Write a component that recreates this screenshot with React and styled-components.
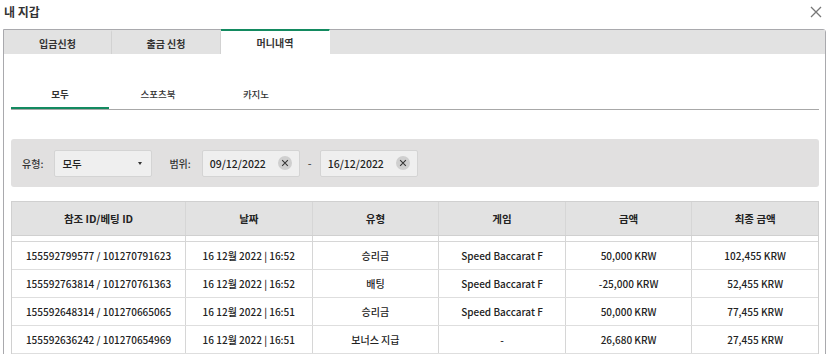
import React, { useState } from 'react';
import styled, { createGlobalStyle } from 'styled-components';

const GlobalStyle = createGlobalStyle`
  html, body {
    margin: 0;
    padding: 0;
    background: #fff;
  }
  body {
    font-family: "Noto Sans CJK KR", sans-serif;
    color: #222;
  }
`;

const Page = styled.div`
  width: 835px;
  height: 354px;
  overflow: hidden;
`;

const TitleBar = styled.div`
  height: 29px;
  display: flex;
  align-items: center;
  justify-content: space-between;
  padding: 0 12px 6px 4px;
  box-sizing: border-box;
`;

const Title = styled.h1`
  margin: 0;
  font-size: 12px;
  font-weight: 700;
  color: #333;
`;

const Close = styled.button`
  border: 0;
  background: none;
  padding: 0;
  display: flex;
  cursor: pointer;
`;

const Frame = styled.div`
  margin: 0 9px 0 3px;
  border: 1px solid #a9a9ad;
  border-top-right-radius: 3px;
  height: 400px;
`;

const TabBar = styled.div`
  display: flex;
  height: 24px;
  background: #e2e2e2;
`;

const Tab = styled.div`
  width: ${p => p.$w}px;
  display: flex;
  align-items: center;
  justify-content: center;
  font-size: 10px;
  font-weight: 700;
  color: #333;
  box-sizing: border-box;
  border-right: 1px solid ${p => (p.$active ? 'transparent' : '#d2d2d2')};
  background: ${p => (p.$active ? '#fff' : 'transparent')};
  border-top: 2px solid ${p => (p.$active ? '#138a60' : 'transparent')};
  margin-top: ${p => (p.$active ? '-1px' : '0')};
  height: ${p => (p.$active ? '25px' : '24px')};
`;

const Content = styled.div`
  padding: 24px 6px 0 7px;
`;

const SubTabs = styled.div`
  display: flex;
  border-bottom: 1px solid #a8a8a8;
`;

const SubTab = styled.div`
  flex: 0 0 98px;
  height: 31px;
  box-sizing: border-box;
  display: flex;
  align-items: center;
  justify-content: center;
  padding-top: 2px;
  font-size: 9.5px;
  font-weight: ${p => (p.$active ? 700 : 500)};
  color: #333;
  border-bottom: 2px solid ${p => (p.$active ? '#138a60' : 'transparent')};
  cursor: pointer;
`;

const Filter = styled.div`
  margin-top: 29px;
  height: 48px;
  background: #e1e0e0;
  border-radius: 3px;
  display: flex;
  align-items: center;
  padding: 0 11px;
`;

const Label = styled.span`
  font-size: 10px;
  font-weight: 500;
  color: #333;
  margin-right: ${p => p.$mr}px;
`;

const Box = styled.div`
  width: 98px;
  height: 27px;
  box-sizing: border-box;
  background: #efefef;
  border: 1px solid #d4d4d4;
  border-radius: 2px;
  display: flex;
  align-items: center;
  justify-content: space-between;
  padding: 0 7px 0 7px;
  font-size: 10.5px;
  font-weight: 500;
  color: #222;
  margin-right: ${p => p.$mr || 0}px;
`;

const Caret = styled.span`
  width: 0;
  height: 0;
  margin-right: 2px;
  border-left: 2px solid transparent;
  border-right: 2px solid transparent;
  border-top: 3px solid #333;
`;

const Clear = styled.span`
  width: 14px;
  height: 14px;
  border-radius: 50%;
  background: #cfcfcf;
  display: flex;
  align-items: center;
  justify-content: center;
`;

const Dash = styled.span`
  width: 20px;
  text-align: center;
  font-size: 11px;
  color: #333;
`;

const Table = styled.div`
  margin-top: 14px;
  border-left: 1px solid #d0d0d0;
  border-right: 1px solid #d0d0d0;
`;

const cols = '173px repeat(5, 1fr)';

const HeadRow = styled.div`
  display: grid;
  grid-template-columns: ${cols};
  height: 35px;
  background: #e2e2e2;
  border-top: 1px solid #d0d0d0;
  border-bottom: 1px solid #d0d0d0;
  box-sizing: border-box;
`;

const Gap = styled.div`
  display: grid;
  grid-template-columns: ${cols};
  height: 5px;
  border-bottom: 1px solid #d6d6d6;
`;

const Row = styled.div`
  display: grid;
  grid-template-columns: ${cols};
  height: 28px;
  border-bottom: 1px solid #dedede;
  box-sizing: border-box;
`;

const Cell = styled.div`
  display: flex;
  align-items: center;
  justify-content: center;
  font-size: ${p => (p.$head ? '10.5px' : '10px')};
  font-weight: ${p => (p.$head ? 700 : 500)};
  color: #222;
  border-left: ${p => (p.$first ? 'none' : '1px solid #d6d6d6')};
  white-space: nowrap;
`;

const XIcon = ({ size = 14, stroke = '#777', width = 1.3 }) => (
  <svg width={size} height={size} viewBox="0 0 14 14">
    <path d="M2 2L12 12M12 2L2 12" stroke={stroke} strokeWidth={width} fill="none" />
  </svg>
);

const tabs = [
  { label: '입금신청', w: 108 },
  { label: '출금 신청', w: 109 },
  { label: '머니내역', w: 109, active: true },
];

const headers = ['참조 ID/베팅 ID', '날짜', '유형', '게임', '금액', '최종 금액'];

const rows = [
  ['155592799577 / 101270791623', '16 12월 2022 | 16:52', '승리금', 'Speed Baccarat F', '50,000 KRW', '102,455 KRW'],
  ['155592763814 / 101270761363', '16 12월 2022 | 16:52', '배팅', 'Speed Baccarat F', '-25,000 KRW', '52,455 KRW'],
  ['155592648314 / 101270665065', '16 12월 2022 | 16:51', '승리금', 'Speed Baccarat F', '50,000 KRW', '77,455 KRW'],
  ['155592636242 / 101270654969', '16 12월 2022 | 16:51', '보너스 지급', '-', '26,680 KRW', '27,455 KRW'],
];

export default function App() {
  const [sub, setSub] = useState(0);
  return (
    <Page>
      <GlobalStyle />
      <TitleBar>
        <Title>내 지갑</Title>
        <Close aria-label="close">
          <XIcon size={14} />
        </Close>
      </TitleBar>
      <Frame>
        <TabBar>
          {tabs.map(t => (
            <Tab key={t.label} $w={t.w} $active={t.active}>{t.label}</Tab>
          ))}
        </TabBar>
        <Content>
          <SubTabs>
            {['모두', '스포츠북', '카지노'].map((t, i) => (
              <SubTab key={t} $active={sub === i} onClick={() => setSub(i)}>{t}</SubTab>
            ))}
          </SubTabs>
          <Filter>
            <Label $mr={11}>유형:</Label>
            <Box $mr={17}>
              <span>모두</span>
              <Caret />
            </Box>
            <Label $mr={11}>범위:</Label>
            <Box>
              <span>09/12/2022</span>
              <Clear><XIcon size={8} stroke="#333" width={1.8} /></Clear>
            </Box>
            <Dash>-</Dash>
            <Box>
              <span>16/12/2022</span>
              <Clear><XIcon size={8} stroke="#333" width={1.8} /></Clear>
            </Box>
          </Filter>
          <Table>
            <HeadRow>
              {headers.map((h, i) => (
                <Cell key={h} $head $first={i === 0}>{h}</Cell>
              ))}
            </HeadRow>
            <Gap>
              {headers.map((h, i) => (
                <Cell key={h} $first={i === 0} />
              ))}
            </Gap>
            {rows.map((r, ri) => (
              <Row key={ri}>
                {r.map((c, i) => (
                  <Cell key={i} $first={i === 0}>{c}</Cell>
                ))}
              </Row>
            ))}
          </Table>
        </Content>
      </Frame>
    </Page>
  );
}
